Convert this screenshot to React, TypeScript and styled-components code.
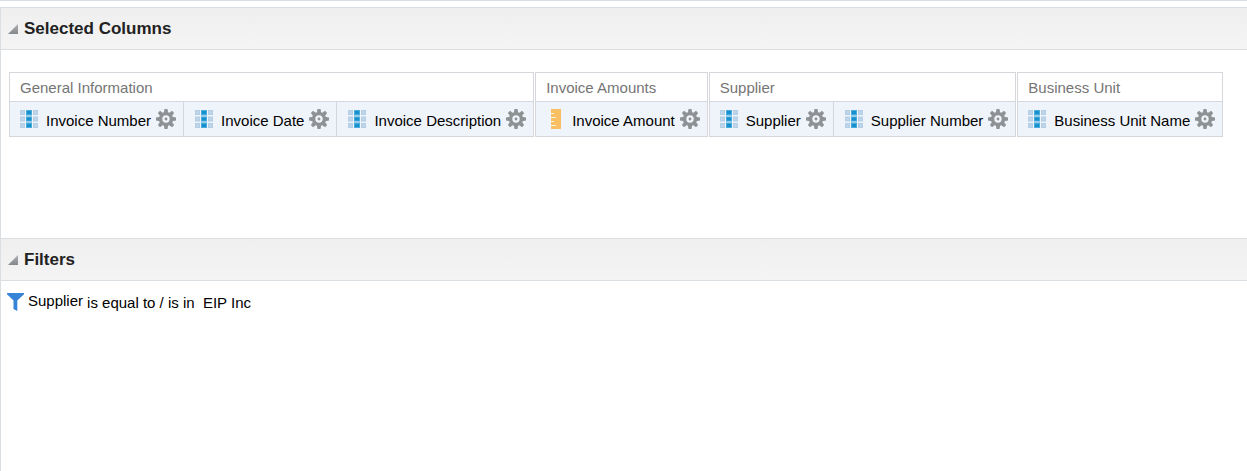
import React from "react";
import styled, { createGlobalStyle } from "styled-components";

const GlobalStyle = createGlobalStyle`
  * { box-sizing: border-box; }
  body {
    margin: 0;
    background: #fff;
    color: #000;
    font-family: "Liberation Sans", Arial, sans-serif;
    font-size: 15px;
    line-height: 18px;
  }
`;

const Page = styled.main`
  min-height: 100vh;
  display: flex;
  flex-direction: column;
  border-top: 1px solid #d6dfe6;
  padding-top: 6px;
`;

const Panel = styled.section<{ $grow?: boolean }>`
  display: flex;
  flex-direction: column;
  flex: ${(p) => (p.$grow ? "1 0 auto" : "none")};
  border-left: 1px solid #d9dfe3;
`;

const PanelHeader = styled.header`
  display: flex;
  align-items: center;
  min-height: 43px;
  padding: 0 7px;
  border: solid #d9dfe3;
  border-width: 1px 0;
  background: linear-gradient(#efefef, #f4f4f4);
`;

const Toggle = styled.button`
  display: flex;
  padding: 0;
  border: 0;
  background: none;
  cursor: pointer;
`;

const Title = styled.h2`
  margin: 0 0 0 6px;
  font-size: 17px;
  line-height: 22px;
  font-weight: bold;
  color: #222;
`;

const ColumnArea = styled.div`
  display: flex;
  align-items: flex-start;
  gap: 1px;
  min-height: 188px;
  padding: 22px 8px 0;
`;

const Group = styled.section`
  flex: none;
  border: 1px solid #d6d7dc;
`;

const GroupName = styled.h3`
  margin: 0;
  padding: 6px 10px 4px;
  font-size: 15px;
  line-height: 18px;
  font-weight: normal;
  color: #757575;
`;

const ColumnList = styled.ul`
  display: flex;
  margin: 0;
  padding: 0;
  list-style: none;
  border-top: 1px solid #d6d7dc;
  background: #eff3fa;
`;

const Column = styled.li`
  display: flex;
  align-items: center;
  height: 34px;
  padding: 0 7px 0 10px;
  white-space: nowrap;

  & + & {
    padding-left: 11px;
    border-left: 1px solid #d6d7dc;
  }
`;

const ColumnName = styled.span`
  margin: 3px 5px 0 8px;
`;

const GearButton = styled.button`
  display: flex;
  padding: 0;
  border: 0;
  background: none;
  cursor: pointer;
`;

const FilterRow = styled.div`
  display: flex;
  align-items: flex-start;
  padding: 11px 6px;
  white-space: pre;
`;

const FilterColumn = styled.span`
  margin: 0 4px;
`;

const FilterCondition = styled.span`
  margin-top: 2px;
`;

const Triangle = () => (
  <svg width="10" height="10" viewBox="0 0 10 10" aria-hidden="true">
    <defs>
      <linearGradient id="tri" x1="0" y1="0" x2="0" y2="1">
        <stop offset="0" stopColor="#b0b2b4" />
        <stop offset="1" stopColor="#85888b" />
      </linearGradient>
    </defs>
    <path d="M10 0V10H0Z" fill="url(#tri)" />
  </svg>
);

const AttributeIcon = () => (
  <svg width="18" height="18" viewBox="0 0 18 18" aria-hidden="true">
    {[0, 1, 2].flatMap((row) =>
      [0, 1, 2].map((col) => {
        const x = [0, 6, 13][col];
        const y = [0, 6.5, 13][row];
        const w = col === 1 ? 6 : 5;
        const strong = col === 1;
        return (
          <g key={`${row}-${col}`}>
            <rect x={x} y={y} width={w} height="5" fill={strong ? "#4aabdb" : "#b3cfe5"} />
            <rect x={x + 1} y={y + 1} width={w - 2} height="3" fill={strong ? "#1591cf" : "#c0d4e9"} />
          </g>
        );
      })
    )}
    <path d="M6 5h6v1.5H6zM6 11.5h6V13H6z" fill="#90cbe9" />
  </svg>
);

const MeasureIcon = () => (
  <svg width="18" height="20" viewBox="0 0 18 20" aria-hidden="true">
    <path d="M5 0H15V20H5Z" fill="#f8bf63" />
    <path d="M5 4.5h3M5 8.5h5M5 12.5h3M5 16.5h5" stroke="#fdf0dc" strokeWidth="1.2" />
  </svg>
);

const GearIcon = () => (
  <svg width="20" height="20" viewBox="0 0 20 20" aria-hidden="true">
    <g fill="#8f9295">
      {[0, 45, 90, 135].map((a) => (
        <path key={a} d="M8.5 0H11.5L12.2 4V16L11.5 20H8.5L7.8 16V4Z" transform={`rotate(${a} 10 10)`} />
      ))}
      <circle cx="10" cy="10" r="7.1" />
    </g>
    <circle cx="10" cy="10" r="3.7" fill="#eff3fa" />
    <circle cx="10" cy="10" r="1.4" fill="#8f9295" />
  </svg>
);

const FunnelIcon = () => (
  <svg width="17" height="20" viewBox="0 0 17 20" aria-hidden="true">
    <path d="M0 1H17V2.2L10.3 8.5V19L6.5 17V8.5L0 2.2Z" fill="#3584d8" />
  </svg>
);

type ColumnDef = { name: string; measure?: boolean };

const groups: { name: string; columns: ColumnDef[] }[] = [
  {
    name: "General Information",
    columns: [{ name: "Invoice Number" }, { name: "Invoice Date" }, { name: "Invoice Description" }],
  },
  { name: "Invoice Amounts", columns: [{ name: "Invoice Amount", measure: true }] },
  { name: "Supplier", columns: [{ name: "Supplier" }, { name: "Supplier Number" }] },
  { name: "Business Unit", columns: [{ name: "Business Unit Name" }] },
];

const Header = ({ title }: { title: string }) => (
  <PanelHeader>
    <Toggle type="button" aria-expanded="true" aria-label={`Collapse ${title}`}>
      <Triangle />
    </Toggle>
    <Title>{title}</Title>
  </PanelHeader>
);

export default function App() {
  return (
    <Page>
      <GlobalStyle />
      <Panel>
        <Header title="Selected Columns" />
        <ColumnArea>
          {groups.map((group) => (
            <Group key={group.name}>
              <GroupName>{group.name}</GroupName>
              <ColumnList>
                {group.columns.map((column) => (
                  <Column key={column.name}>
                    {column.measure ? <MeasureIcon /> : <AttributeIcon />}
                    <ColumnName>{column.name}</ColumnName>
                    <GearButton type="button" aria-label={`${column.name} options`}>
                      <GearIcon />
                    </GearButton>
                  </Column>
                ))}
              </ColumnList>
            </Group>
          ))}
        </ColumnArea>
      </Panel>
      <Panel $grow>
        <Header title="Filters" />
        <FilterRow>
          <FunnelIcon />
          <FilterColumn>Supplier</FilterColumn>
          <FilterCondition>{"is equal to / is in  EIP Inc"}</FilterCondition>
        </FilterRow>
      </Panel>
    </Page>
  );
}
